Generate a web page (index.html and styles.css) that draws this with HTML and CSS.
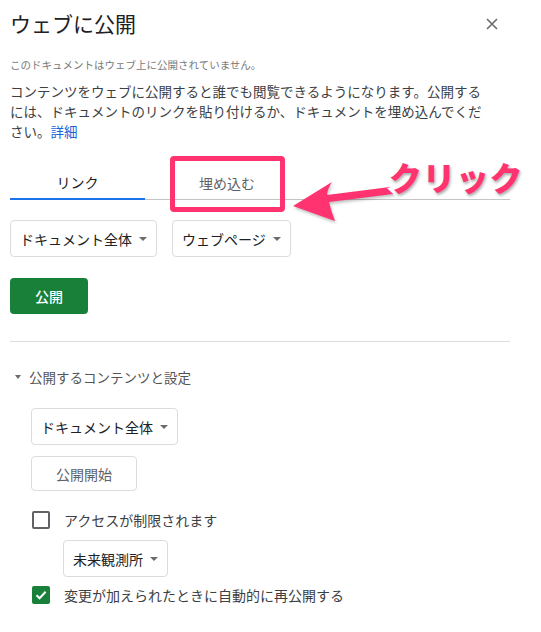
FILE: index.html
```html
<!DOCTYPE html>
<html lang="ja">
<head>
<meta charset="utf-8">
<title>ウェブに公開</title>
<link rel="stylesheet" href="styles.css">
</head>
<body>
<div class="dialog">
  <div class="header">
    <h1 class="title">ウェブに公開</h1>
    <span class="close" aria-label="閉じる">
      <svg width="12" height="12" viewBox="0 0 12 12"><path d="M1 1L11 11M11 1L1 11" stroke="#6b6b6b" stroke-width="1.6" fill="none"/></svg>
    </span>
  </div>
  <p class="status">このドキュメントはウェブ上に公開されていません。</p>
  <p class="desc">コンテンツをウェブに公開すると誰でも閲覧できるようになります。公開する<br>には、ドキュメントのリンクを貼り付けるか、ドキュメントを埋め込んでくだ<br>さい。<a class="link" href="#">詳細</a></p>

  <div class="tabs">
    <div class="tab active">リンク</div>
    <div class="tab embed">埋め込む<span class="highlight"></span></div>
    <svg class="arrow" width="120" height="50" viewBox="0 0 120 50">
      <path d="M4 34 L43 10 Q38 18 38 23 L101 15 Q107 17 104 22 L40 30 Q42 39 46 49 Z" fill="#ff3370"/>
    </svg>
    <span class="callout">クリック</span>
  </div>

  <div class="row">
    <div class="select">ドキュメント全体<span class="caret"></span></div>
    <div class="select">ウェブページ<span class="caret"></span></div>
  </div>

  <button class="btn-primary">公開</button>

  <div class="sep"></div>

  <div class="section-title"><span class="caret"></span>公開するコンテンツと設定</div>

  <div class="settings">
    <div class="select">ドキュメント全体<span class="caret"></span></div>
    <button class="btn">公開開始</button>
    <div class="check"><span class="box"></span>アクセスが制限されます</div>
    <div class="indent">
      <div class="select">未来観測所<span class="caret"></span></div>
    </div>
    <div class="check"><span class="box checked"><svg width="14" height="14" viewBox="0 0 14 14"><path d="M2.5 7.2L5.6 10.2L11.6 3.8" stroke="#fff" stroke-width="2" fill="none"/></svg></span>変更が加えられたときに自動的に再公開する</div>
  </div>
</div>
</body>
</html>
```

FILE: styles.css
```css
* { box-sizing: border-box; }

body {
  margin: 0;
  background: #fff;
  font-family: "Noto Sans CJK JP", "Noto Sans", sans-serif;
  color: #202124;
}

.dialog {
  width: 541px;
  padding: 0 31px 0 10px;
}

.header {
  display: flex;
  justify-content: space-between;
  align-items: center;
  margin-top: 9px;
  height: 28px;
}

.title {
  margin: 0;
  font-size: 21px;
  font-weight: 400;
  line-height: 28px;
  color: #202124;
}

.close {
  display: flex;
  margin-right: 12px;
  margin-top: 2px;
}

.status {
  margin: 20px 0 0;
  font-size: 10.5px;
  line-height: 16px;
  color: #7a7a7a;
}

.desc {
  margin: 8px 0 0;
  font-size: 13.5px;
  line-height: 20px;
  color: #3c4043;
  white-space: nowrap;
}

.link {
  color: #1a66d9;
  text-decoration: none;
}

.tabs {
  position: relative;
  display: flex;
  margin-top: 25px;
  border-bottom: 1px solid #c4c4c4;
}

.tab {
  position: relative;
  height: 33px;
  display: flex;
  align-items: center;
  justify-content: center;
  font-size: 14px;
  color: #5f6368;
}

.tab.active {
  width: 135px;
  color: #202124;
  border-bottom: 2px solid #1a73e8;
  margin-bottom: -1px;
  height: 34px;
}

.tab.embed {
  padding: 0 54px;
}

.highlight {
  position: absolute;
  left: 25px;
  top: -10px;
  width: 115px;
  height: 56px;
  border: 5px solid #ff3370;
  border-radius: 4px;
}

.arrow {
  position: absolute;
  left: 279px;
  top: 6px;
  filter: drop-shadow(1px 2px 1.5px rgba(0, 0, 0, 0.25));
}

.callout {
  position: absolute;
  left: 379px;
  top: -11px;
  white-space: nowrap;
  font-size: 33px;
  font-weight: 900;
  line-height: 44px;
  color: #ff3370;
  -webkit-text-stroke: 7px #fff;
  paint-order: stroke fill;
  text-shadow: 1px 2px 3px rgba(0, 0, 0, 0.35);
  letter-spacing: 0.5px;
}

.row {
  display: flex;
  gap: 15px;
  margin-top: 20px;
}

.select {
  display: inline-flex;
  align-items: center;
  gap: 7px;
  height: 37px;
  padding: 0 9px;
  border: 1px solid #dadce0;
  border-radius: 4px;
  font-size: 14px;
  color: #202124;
}

.caret {
  width: 0;
  height: 0;
  border-left: 4px solid transparent;
  border-right: 4px solid transparent;
  border-top: 4px solid #6b6b6b;
}

.btn-primary {
  display: block;
  margin-top: 21px;
  width: 78px;
  height: 36px;
  border: none;
  border-radius: 4px;
  background: #188038;
  color: #fff;
  font-family: inherit;
  font-size: 14px;
  font-weight: 500;
}

.sep {
  margin-top: 27px;
  height: 1px;
  background: #dadce0;
}

.section-title {
  display: flex;
  align-items: center;
  margin-top: 25px;
  font-size: 13.5px;
  line-height: 20px;
  color: #555;
}

.section-title .caret {
  margin: 0 8px 0 5px;
  border-left-width: 3.5px;
  border-right-width: 3.5px;
}

.settings {
  padding-left: 21px;
  display: flex;
  flex-direction: column;
  align-items: flex-start;
}

.settings > .select {
  margin-top: 21px;
}

.btn {
  margin-top: 11px;
  width: 106px;
  height: 35px;
  border: 1px solid #dadce0;
  border-radius: 4px;
  background: #fff;
  color: #5f6368;
  font-family: inherit;
  font-size: 14px;
}

.check {
  display: flex;
  align-items: center;
  gap: 14px;
  height: 20px;
  margin-top: 19px;
  font-size: 14px;
  color: #3c4043;
}

.box {
  width: 18px;
  height: 18px;
  margin-left: 1px;
  border: 2px solid #5f6368;
  border-radius: 2px;
  display: flex;
  align-items: center;
  justify-content: center;
}

.box.checked {
  background: #188038;
  border-color: #188038;
}

.indent {
  padding-left: 32px;
  margin-top: 10px;
}

.indent + .check {
  margin-top: 8px;
}
```
